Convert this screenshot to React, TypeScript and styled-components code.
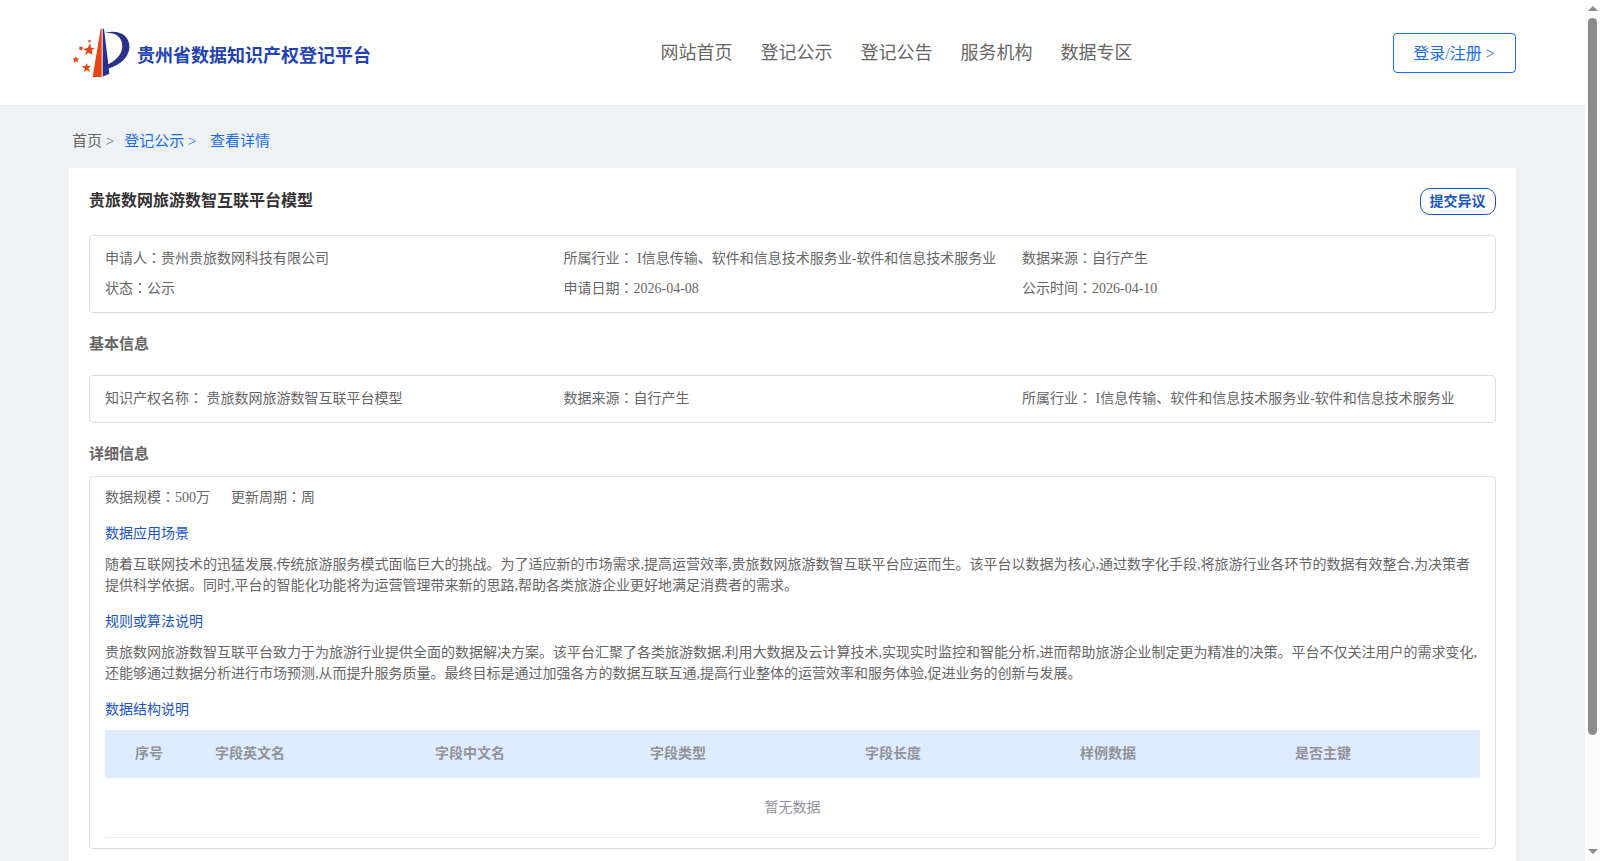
import React from 'react';
import styled, { createGlobalStyle } from 'styled-components';

const GlobalStyle = createGlobalStyle`
  * { box-sizing: border-box; }
  html, body { margin: 0; height: 861px; overflow: hidden; }
  body {
    background: #eef2f5;
    color: #666;
    font-family: "Liberation Serif", "Noto Sans CJK SC", serif;
    font-size: 14px;
  }
  h1, h2, h3, p { margin: 0; }
`;

const Window = styled.div`
  display: flex;
  height: 861px;
  overflow: hidden;
`;

const Page = styled.div`
  width: 1585px;
  height: 861px;
  overflow: hidden;
  background: #eef2f5;
`;

const Header = styled.header`
  display: flex;
  align-items: flex-start;
  height: 105px;
  padding: 0 69px;
  background: #fff;
`;

const Brand = styled.div`
  display: flex;
  width: 591.5px;
`;

const LogoMark = styled.svg`
  flex: none;
  width: 66px;
  height: 58px;
  margin: 24px 3px 0 -1px;
`;

const BrandName = styled.span`
  padding-top: 43px;
  font-size: 18px;
  line-height: 27px;
  font-weight: 700;
  color: #2343b5;
  white-space: nowrap;
`;

const Nav = styled.nav`
  display: flex;
  gap: 28px;
  padding-top: 39px;
  flex: 1;
`;

const NavLink = styled.a`
  font-size: 18px;
  line-height: 28px;
  white-space: nowrap;
`;

const LoginButton = styled.button`
  width: 123px;
  height: 40px;
  margin-top: 33px;
  padding: 2px 1px 0 0;
  border: 1px solid #1a6df0;
  border-radius: 4px;
  background: #fff;
  color: #1a6df0;
  font: inherit;
  font-size: 16px;
  line-height: 36px;
`;

const Breadcrumb = styled.div`
  display: flex;
  height: 63px;
  padding: 24px 72px 0;
  font-size: 15px;
  line-height: 24px;
`;

const Crumb = styled.span<{ $active?: boolean; $gap?: number }>`
  margin-left: ${(p) => p.$gap ?? 0}px;
  color: ${(p) => (p.$active ? '#1a6df0' : '#666')};
`;

const Card = styled.main`
  width: 1447px;
  height: 760px;
  margin-left: 69px;
  padding: 0 20px;
  background: #fff;
`;

const TitleRow = styled.div`
  display: flex;
  justify-content: space-between;
  height: 67px;
  padding-top: 20px;
`;

const Title = styled.h1`
  padding-top: 1px;
  font-size: 16px;
  line-height: 24px;
  color: #333;
`;

const ObjectionButton = styled.button`
  width: 76px;
  height: 27px;
  padding: 0 1px 0 0;
  border: 1px solid #1b56c4;
  border-radius: 10px;
  background: #fff;
  color: #1b56c4;
  font: inherit;
  font-weight: 700;
  line-height: 25px;
`;

const Panel = styled.section`
  padding: 8px 15px;
  border: 1px solid #dcdee0;
  border-radius: 4px;
`;

const InfoGrid = styled(Panel)`
  display: grid;
  grid-template-columns: repeat(3, 458.5px);
  line-height: 30px;
  white-space: pre;
`;

const Colon = styled.span`
  font-family: "Noto Sans CJK TC", sans-serif;
  line-height: 1;
`;

const SectionTitle = styled.h2<{ $height: number }>`
  height: ${(p) => p.$height}px;
  padding-top: 19px;
  font-size: 15px;
  line-height: 24px;
`;

const DetailPanel = styled(Panel)`
  height: 373px;
  padding-top: 6px;
`;

const Summary = styled.div`
  display: flex;
  gap: 21px;
  line-height: 30px;
`;

const SubTitle = styled.h3`
  margin-top: 10px;
  font-size: 14px;
  font-weight: 400;
  line-height: 21px;
  color: #1b56c4;
`;

const Paragraph = styled.p`
  margin: 10px 0 15px;
  line-height: 21px;
`;

const Table = styled.table`
  width: 1375px;
  margin-top: 10px;
  border-collapse: separate;
  border-spacing: 0;
  table-layout: fixed;
`;

const HeadCell = styled.th<{ $width?: number; $indent?: number }>`
  width: ${(p) => (p.$width ? `${p.$width}px` : 'auto')};
  height: 48px;
  padding: 0 0 1px ${(p) => p.$indent ?? 10}px;
  background: #dfecfe;
  color: #909399;
  line-height: 21px;
  text-align: left;
`;

const EmptyCell = styled.td`
  height: 60px;
  padding: 0;
  border-bottom: 1px solid #ebeef5;
  color: #909399;
  line-height: 21px;
  text-align: center;
`;

const Scrollbar = styled.div`
  display: flex;
  flex-direction: column;
  align-items: center;
  width: 15px;
  height: 861px;
  padding: 6px 0 7px;
  background: #fcfcfc;
`;

const Thumb = styled.div`
  width: 9px;
  height: 717px;
  margin: 7px 0 auto;
  border-radius: 5px;
  background: #8b8b8b;
`;

const Arrow = styled.div<{ $down?: boolean }>`
  border: 0 solid transparent;
  border-width: ${(p) => (p.$down ? '5px 5px 0' : '0 5px 5px')};
  border-color: ${(p) => (p.$down ? '#8b8b8b' : 'transparent')} transparent
    ${(p) => (p.$down ? 'transparent' : '#8b8b8b')};
`;

const Logo = () => (
  <LogoMark viewBox="0 0 198 174">
    <path d="M98 14 L101 14 V159 H74 Z" fill="#e64614" />
    <path d="M104 14 H108 L121 121 C151 105 167 83 162 57 C157 34 140 26 112 26 C151 17 181 31 184 64 C187 98 155 125 122 133 L124 149 L104 158 Z" fill="#2b3088" />
    <g fill="#e64614">
      <path d="M67 58 L69 71 L80 73 L71 79 L74 92 L62 86 L51 94 L56 81 L46 76 L59 71 Z" />
      <path d="M56 117 L59 126 L69 126 L61 133 L66 144 L56 139 L46 145 L51 134 L41 127 L52 126 Z" />
      <path d="M24 96 L26 103 L34 104 L28 109 L30 116 L23 112 L16 117 L19 109 L14 103 L21 103 Z" />
      <path d="M40 66 L42 70 L47 72 L42 76 L41 81 L37 77 L32 77 L35 73 L33 67 L38 69 Z" />
      <path d="M65 46 L66 49 L70 50 L67 53 L66 57 L63 54 L60 54 L62 51 L61 48 L64 49 Z" />
    </g>
  </LogoMark>
);

const navItems = ['网站首页', '登记公示', '登记公告', '服务机构', '数据专区'];

const overview = [
  ['申请人', '贵州贵旅数网科技有限公司'],
  ['所属行业', ' I信息传输、软件和信息技术服务业-软件和信息技术服务业'],
  ['数据来源', '自行产生'],
  ['状态', '公示'],
  ['申请日期', '2026-04-08'],
  ['公示时间', '2026-04-10'],
];

const basics = [
  ['知识产权名称', ' 贵旅数网旅游数智互联平台模型'],
  ['数据来源', '自行产生'],
  ['所属行业', ' I信息传输、软件和信息技术服务业-软件和信息技术服务业'],
];

const columns: { label: string; width?: number; indent?: number }[] = [
  { label: '序号', width: 100, indent: 30 },
  { label: '字段英文名', width: 220 },
  { label: '字段中文名', width: 215 },
  { label: '字段类型', width: 215 },
  { label: '字段长度', width: 215 },
  { label: '样例数据', width: 215 },
  { label: '是否主键' },
];

// The colon sits in the middle of its em box, as in the Traditional Chinese forms.
const Field = ({ label, value }: { label: string; value: string }) => (
  <span>
    {label}
    <Colon lang="zh-TW">：</Colon>
    {value}
  </span>
);

export default function App() {
  return (
    <Window lang="zh-CN">
      <GlobalStyle />
      <Page>
        <Header>
          <Brand>
            <Logo />
            <BrandName>贵州省数据知识产权登记平台</BrandName>
          </Brand>
          <Nav>
            {navItems.map((item) => (
              <NavLink key={item}>{item}</NavLink>
            ))}
          </Nav>
          <LoginButton>登录/注册 &gt;</LoginButton>
        </Header>
        <Breadcrumb>
          <Crumb>首页 &gt;</Crumb>
          <Crumb $active $gap={10}>登记公示 &gt;</Crumb>
          <Crumb $active $gap={13.5}>查看详情</Crumb>
        </Breadcrumb>
        <Card>
          <TitleRow>
            <Title>贵旅数网旅游数智互联平台模型</Title>
            <ObjectionButton>提交异议</ObjectionButton>
          </TitleRow>
          <InfoGrid>
            {overview.map(([label, value]) => (
              <Field key={label} label={label} value={value} />
            ))}
          </InfoGrid>
          <SectionTitle $height={62}>基本信息</SectionTitle>
          <InfoGrid>
            {basics.map(([label, value]) => (
              <Field key={label} label={label} value={value} />
            ))}
          </InfoGrid>
          <SectionTitle $height={53}>详细信息</SectionTitle>
          <DetailPanel>
            <Summary>
              <Field label="数据规模" value="500万" />
              <Field label="更新周期" value="周" />
            </Summary>
            <SubTitle>数据应用场景</SubTitle>
            <Paragraph>
              随着互联网技术的迅猛发展,传统旅游服务模式面临巨大的挑战。为了适应新的市场需求,提高运营效率,贵旅数网旅游数智互联平台应运而生。该平台以数据为核心,通过数字化手段,将旅游行业各环节的数据有效整合,为决策者提供科学依据。同时,平台的智能化功能将为运营管理带来新的思路,帮助各类旅游企业更好地满足消费者的需求。
            </Paragraph>
            <SubTitle>规则或算法说明</SubTitle>
            <Paragraph>
              贵旅数网旅游数智互联平台致力于为旅游行业提供全面的数据解决方案。该平台汇聚了各类旅游数据,利用大数据及云计算技术,实现实时监控和智能分析,进而帮助旅游企业制定更为精准的决策。平台不仅关注用户的需求变化,还能够通过数据分析进行市场预测,从而提升服务质量。最终目标是通过加强各方的数据互联互通,提高行业整体的运营效率和服务体验,促进业务的创新与发展。
            </Paragraph>
            <SubTitle>数据结构说明</SubTitle>
            <Table>
              <thead>
                <tr>
                  {columns.map((c) => (
                    <HeadCell key={c.label} $width={c.width} $indent={c.indent}>
                      {c.label}
                    </HeadCell>
                  ))}
                </tr>
              </thead>
              <tbody>
                <tr>
                  <EmptyCell colSpan={columns.length}>暂无数据</EmptyCell>
                </tr>
              </tbody>
            </Table>
          </DetailPanel>
        </Card>
      </Page>
      <Scrollbar>
        <Arrow />
        <Thumb />
        <Arrow $down />
      </Scrollbar>
    </Window>
  );
}
